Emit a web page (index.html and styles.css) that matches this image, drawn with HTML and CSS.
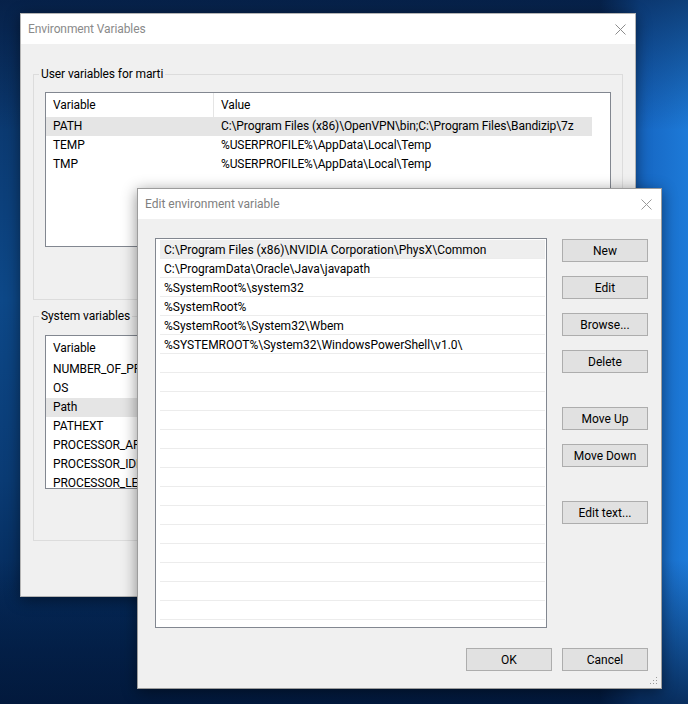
FILE: index.html
```html
<!DOCTYPE html>
<html lang="en">
<head>
    <meta charset="UTF-8">
    <meta name="viewport" content="width=device-width, initial-scale=1.0">
    <title>Edit environment variable</title>
    <link rel="stylesheet" href="styles.css">
</head>
<body>
    <div class="desktop">

        <!-- Environment Variables (behind) -->
        <div class="window env_window">
            <div class="titlebar">
                <span class="title">Environment Variables</span>
                <svg class="close" width="11" height="11" viewBox="0 0 11 11"><path d="M0.5 0.5L10.5 10.5M10.5 0.5L0.5 10.5" stroke="#8c8c8c" stroke-width="1"/></svg>
            </div>
            <div class="env_body">
                <div class="group user_group">
                    <div class="group_label">User variables for marti</div>
                    <div class="listview user_list">
                        <div class="lv_head"><span class="lv_var">Variable</span><span class="lv_val">Value</span></div>
                        <div class="lv_row selected"><span class="lv_var">PATH</span><span class="lv_val">C:\Program Files (x86)\OpenVPN\bin;C:\Program Files\Bandizip\7z</span></div>
                        <div class="lv_row"><span class="lv_var">TEMP</span><span class="lv_val">%USERPROFILE%\AppData\Local\Temp</span></div>
                        <div class="lv_row"><span class="lv_var">TMP</span><span class="lv_val">%USERPROFILE%\AppData\Local\Temp</span></div>
                    </div>
                </div>
                <div class="group system_group">
                    <div class="group_label">System variables</div>
                    <div class="listview system_list">
                        <div class="lv_head"><span class="lv_var">Variable</span></div>
                        <div class="lv_row"><span class="lv_var">NUMBER_OF_PROCESSORS</span></div>
                        <div class="lv_row"><span class="lv_var">OS</span></div>
                        <div class="lv_row selected"><span class="lv_var">Path</span></div>
                        <div class="lv_row"><span class="lv_var">PATHEXT</span></div>
                        <div class="lv_row"><span class="lv_var">PROCESSOR_ARCHITECTURE</span></div>
                        <div class="lv_row"><span class="lv_var">PROCESSOR_IDENTIFIER</span></div>
                        <div class="lv_row"><span class="lv_var">PROCESSOR_LEVEL</span></div>
                    </div>
                </div>
            </div>
        </div>

        <!-- Edit environment variable (front) -->
        <div class="window edit_window">
            <div class="titlebar">
                <span class="title">Edit environment variable</span>
                <svg class="close" width="11" height="11" viewBox="0 0 11 11"><path d="M0.5 0.5L10.5 10.5M10.5 0.5L0.5 10.5" stroke="#9a9a9a" stroke-width="1"/></svg>
            </div>
            <div class="edit_body">
                <div class="edit_main">
                    <div class="path_list">
                        <div class="item selected">C:\Program Files (x86)\NVIDIA Corporation\PhysX\Common</div>
                        <div class="item">C:\ProgramData\Oracle\Java\javapath</div>
                        <div class="item">%SystemRoot%\system32</div>
                        <div class="item">%SystemRoot%</div>
                        <div class="item">%SystemRoot%\System32\Wbem</div>
                        <div class="item">%SYSTEMROOT%\System32\WindowsPowerShell\v1.0\</div>
                        <div class="item"></div>
                        <div class="item"></div>
                        <div class="item"></div>
                        <div class="item"></div>
                        <div class="item"></div>
                        <div class="item"></div>
                        <div class="item"></div>
                        <div class="item"></div>
                        <div class="item"></div>
                        <div class="item"></div>
                        <div class="item"></div>
                        <div class="item"></div>
                        <div class="item"></div>
                        <div class="item"></div>
                    </div>
                    <div class="side_buttons">
                        <button class="btn">New</button>
                        <button class="btn">Edit</button>
                        <button class="btn">Browse...</button>
                        <button class="btn">Delete</button>
                        <button class="btn spaced">Move Up</button>
                        <button class="btn">Move Down</button>
                        <button class="btn spaced">Edit text...</button>
                    </div>
                </div>
                <div class="dialog_buttons">
                    <button class="btn">OK</button>
                    <button class="btn">Cancel</button>
                </div>
            </div>
            <svg class="grip" width="8" height="8" viewBox="0 0 8 8">
                <rect x="6" y="0" width="1" height="1" fill="#9a9a9a"/>
                <rect x="3" y="3" width="1" height="1" fill="#9a9a9a"/>
                <rect x="6" y="3" width="1" height="1" fill="#9a9a9a"/>
                <rect x="0" y="6" width="1" height="1" fill="#9a9a9a"/>
                <rect x="3" y="6" width="1" height="1" fill="#9a9a9a"/>
                <rect x="6" y="6" width="1" height="1" fill="#9a9a9a"/>
            </svg>
        </div>

    </div>
</body>
</html>
```

FILE: styles.css
```css
*{
    margin: 0;
    padding: 0;
    box-sizing: border-box;
}
body{
    width: 688px;
    height: 704px;
    overflow: hidden;
    font-family: Roboto, "Noto Sans", sans-serif;
    font-size: 12px;
    color: #000;
    background:
        linear-gradient(180deg, rgba(4, 24, 58, 0.6) 0, rgba(4, 24, 58, 0) 130px),
        linear-gradient(180deg, rgba(2, 22, 55, 0) 560px, rgba(2, 22, 55, 0.75) 704px),
        linear-gradient(90deg, rgba(22, 102, 194, 0) 600px, #1666c2 640px, #1d7ad8 688px),
        linear-gradient(180deg, #0a2f60 0, #0d4888 300px, #0a3b74 480px, #052a5a 600px, #03234e 704px);
}
.desktop{
    position: relative;
    width: 688px;
    height: 704px;
}

/* windows */
.window{
    position: absolute;
    background-color: #f0f0f0;
    box-shadow: 0 3px 14px rgba(0, 0, 0, 0.45);
    display: flex;
    flex-direction: column;
}
.env_window{
    left: 20px;
    top: 13px;
    width: 616px;
    height: 584px;
    border: 1px solid #b4b4b4;
    letter-spacing: -0.1px;
}
.edit_window{
    left: 137px;
    top: 188px;
    width: 525px;
    height: 501px;
    border: 1px solid #9c9c9c;
}
.titlebar{
    height: 30px;
    background-color: #fff;
    display: flex;
    align-items: center;
    justify-content: space-between;
    padding: 0 9px 0 7px;
    flex-shrink: 0;
}
.title{
    color: #8a8a8a;
}
.edit_window .title{
    color: #808080;
}
.close{
    display: block;
}

/* Environment Variables */
.env_body{
    padding: 30px 12px 0 12px;
}
.group{
    border: 1px solid #dcdcdc;
    padding: 0 11px;
}
.user_group{
    height: 226px;
}
.system_group{
    height: 225px;
    margin-top: 16px;
}
.group_label{
    width: fit-content;
    margin: -10px 0 0 -6px;
    padding: 0 2px;
    line-height: 18px;
    background-color: #f0f0f0;
}
.listview{
    border: 1px solid #828790;
    background-color: #fff;
    overflow: hidden;
}
.user_list{
    height: 155px;
    margin-top: 9px;
}
.system_list{
    height: 154px;
    margin-top: 10px;
}
.lv_head, .lv_row{
    display: flex;
    width: 546px;
    white-space: nowrap;
}
.lv_head{
    height: 24px;
    line-height: 24px;
}
.lv_row{
    height: 19px;
    line-height: 19px;
}
.lv_row.selected{
    background-color: #e5e5e5;
}
.lv_var{
    width: 168px;
    padding-left: 7px;
    flex-shrink: 0;
    overflow: hidden;
}
.lv_head .lv_var{
    border-right: 1px solid #e5e5e5;
}
.lv_val{
    padding-left: 7px;
}

/* Edit environment variable */
.edit_body{
    padding: 19px 13px 0 17px;
}
.edit_main{
    display: flex;
    gap: 15px;
}
.path_list{
    width: 392px;
    height: 390px;
    border: 1px solid #828790;
    background-color: #fff;
    padding-top: 1px;
    overflow: hidden;
}
.item{
    height: 19px;
    line-height: 21px;
    margin: 0 1px 0 4px;
    padding-left: 4px;
    border-bottom: 1px solid #ececec;
    white-space: nowrap;
}
.item.selected{
    background-color: #eeeeee;
}
.side_buttons{
    display: flex;
    flex-direction: column;
    gap: 14px;
    padding-top: 1px;
}
.btn{
    width: 86px;
    height: 23px;
    font-family: inherit;
    font-size: 12px;
    color: #000;
    background-color: #e1e1e1;
    border: 1px solid #adadad;
}
.btn.spaced{
    margin-top: 20px;
}
.dialog_buttons{
    display: flex;
    justify-content: flex-end;
    gap: 10px;
    margin-top: 20px;
}
.grip{
    position: absolute;
    right: 3px;
    bottom: 3px;
}
```
